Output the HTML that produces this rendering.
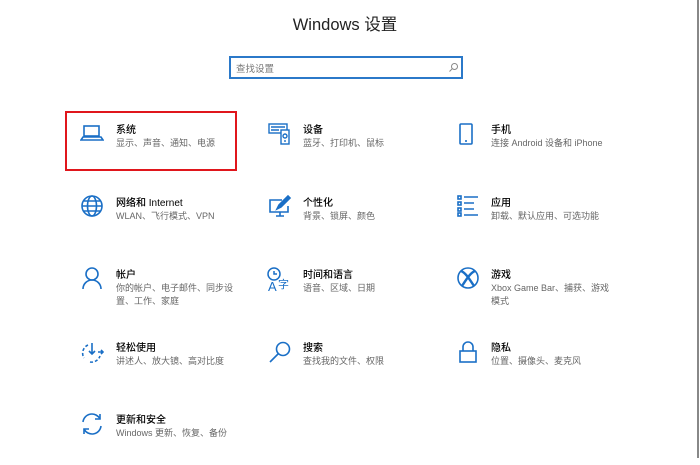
<!DOCTYPE html>
<html><head><meta charset="utf-8"><style>
body{margin:0;width:700px;height:465px;background:#fff;position:relative;overflow:hidden;font-family:"Liberation Sans","Noto Sans CJK SC",sans-serif;}
.t{position:absolute;font-size:10px;color:#000;white-space:nowrap;line-height:12px;font-weight:500}
.s{position:absolute;font-size:9px;color:#666;line-height:13px;white-space:nowrap}
svg{position:absolute}
</style></head><body>
<div style="position:absolute;left:0;width:690px;top:11px;text-align:center;font-size:16.5px;color:#222;">Windows 设置</div>
<div style="position:absolute;left:229px;top:56px;width:230px;height:19px;border:2px solid #2b79c9;"></div>
<div style="position:absolute;left:236px;top:61px;font-size:9.5px;color:#777">查找设置</div>
<svg style="left:448px;top:62px" width="11" height="11" viewBox="0 0 11 11"><circle cx="6.5" cy="4.5" r="3" fill="none" stroke="#888"/><path d="M4.3 6.7L1.5 9.5" stroke="#888"/></svg>
<div style="position:absolute;left:65px;top:111px;width:168px;height:56px;border:2px solid #e0161c"></div>
<div style="position:absolute;left:697px;top:0;width:2px;height:458px;background:#888"></div>

<svg style="left:80px;top:124px" width="24" height="20" viewBox="0 0 24 20" fill="none" stroke="#1a6fc6" stroke-width="1.6"><rect x="4" y="2" width="15" height="10"/><path d="M1 16h22l-2-3H3z"/></svg>
<div class="t" style="left:116px;top:125px">系统</div><div class="s" style="left:116px;top:137px">显示、声音、通知、电源</div>

<svg style="left:268px;top:122px" width="24" height="24" viewBox="0 0 24 24" fill="none" stroke="#1a6fc6" stroke-width="1.4"><rect x="1" y="2" width="18" height="9"/><path d="M3 5h14M3 8h8"/><rect x="13" y="8" width="8" height="14" fill="#fff"/><circle cx="17" cy="14" r="2"/><path d="M16 19h2"/></svg>
<div class="t" style="left:303px;top:125px">设备</div><div class="s" style="left:303px;top:137px">蓝牙、打印机、鼠标</div>

<svg style="left:456px;top:122px" width="20" height="24" viewBox="0 0 20 24" fill="none" stroke="#1a6fc6" stroke-width="1.6"><rect x="4" y="2" width="12" height="20" rx="1"/><path d="M9 19h2"/></svg>
<div class="t" style="left:491px;top:125px">手机</div><div class="s" style="left:491px;top:137px">连接 Android 设备和 iPhone</div>

<svg style="left:80px;top:194px" width="24" height="24" viewBox="0 0 24 24" fill="none" stroke="#1a6fc6" stroke-width="1.6"><circle cx="12" cy="12" r="10"/><ellipse cx="12" cy="12" rx="4.5" ry="10"/><path d="M2 12h20M4 7h16M4 17h16"/></svg>
<div class="t" style="left:116px;top:198px">网络和 Internet</div><div class="s" style="left:116px;top:210px">WLAN、飞行模式、VPN</div>

<svg style="left:268px;top:194px" width="24" height="24" viewBox="0 0 24 24" fill="none" stroke="#1a6fc6" stroke-width="1.6"><path d="M14 6H2v12h18v-6M8 22h8M12 18v4"/><path d="M9 15l2-4 9-9 2 2-9 9z" fill="#1a6fc6"/></svg>
<div class="t" style="left:303px;top:198px">个性化</div><div class="s" style="left:303px;top:210px">背景、锁屏、颜色</div>

<svg style="left:456px;top:194px" width="24" height="24" viewBox="0 0 24 24" fill="none" stroke="#1a6fc6" stroke-width="1.6"><rect x="2" y="2" width="3" height="3"/><rect x="2" y="8" width="3" height="3"/><rect x="2" y="14" width="3" height="3"/><rect x="2" y="19" width="3" height="3"/><path d="M8 3h14M8 9h10M8 15h10M8 21h14"/></svg>
<div class="t" style="left:491px;top:198px">应用</div><div class="s" style="left:491px;top:210px">卸载、默认应用、可选功能</div>

<svg style="left:80px;top:266px" width="24" height="24" viewBox="0 0 24 24" fill="none" stroke="#1a6fc6" stroke-width="1.6"><circle cx="12" cy="8" r="6"/><path d="M3 23c0-5 4-9 9-9s9 4 9 9"/></svg>
<div class="t" style="left:116px;top:270px">帐户</div><div class="s" style="left:116px;top:282px">你的帐户、电子邮件、同步设<br>置、工作、家庭</div>

<svg style="left:266px;top:266px" width="26" height="26" viewBox="0 0 26 26" fill="none" stroke="#1a6fc6" stroke-width="1.5"><circle cx="8" cy="8" r="6"/><path d="M8 5v3h3"/><text x="2" y="25" font-size="13" fill="#1a6fc6" stroke="none" font-family="Liberation Sans">A</text><text x="12" y="22" font-size="11" fill="#1a6fc6" stroke="none" font-family="Noto Sans CJK SC">字</text></svg>
<div class="t" style="left:303px;top:270px">时间和语言</div><div class="s" style="left:303px;top:282px">语音、区域、日期</div>

<svg style="left:456px;top:266px" width="24" height="24" viewBox="0 0 24 24" fill="none" stroke="#1a6fc6" stroke-width="1.6"><circle cx="12" cy="12" r="10"/><path d="M5 5c5 2 9 9 13 15M19 5c-5 2-9 9-13 15" stroke-width="2.4"/></svg>
<div class="t" style="left:491px;top:270px">游戏</div><div class="s" style="left:491px;top:282px">Xbox Game Bar、捕获、游戏<br>模式</div>

<svg style="left:80px;top:340px" width="24" height="24" viewBox="0 0 24 24" fill="none" stroke="#1a6fc6" stroke-width="1.6"><path d="M8 5a9 9 0 0 0-4 13M10 22a9 9 0 0 0 10-6" stroke-dasharray="3 2"/><path d="M12 3v11M9 11l3 3 3-3M18 12h5M21 10l2 2-2 2"/></svg>
<div class="t" style="left:116px;top:343px">轻松使用</div><div class="s" style="left:116px;top:355px">讲述人、放大镜、高对比度</div>

<svg style="left:268px;top:340px" width="24" height="24" viewBox="0 0 24 24" fill="none" stroke="#1a6fc6" stroke-width="1.6"><circle cx="15" cy="9" r="6.5"/><path d="M10.5 13.5L2 22"/></svg>
<div class="t" style="left:303px;top:343px">搜索</div><div class="s" style="left:303px;top:355px">查找我的文件、权限</div>

<svg style="left:456px;top:340px" width="24" height="24" viewBox="0 0 24 24" fill="none" stroke="#1a6fc6" stroke-width="1.6"><path d="M7 11V7a5 5 0 0 1 10 0v4"/><rect x="4" y="11" width="16" height="11"/></svg>
<div class="t" style="left:491px;top:343px">隐私</div><div class="s" style="left:491px;top:355px">位置、摄像头、麦克风</div>

<svg style="left:80px;top:412px" width="24" height="24" viewBox="0 0 24 24" fill="none" stroke="#1a6fc6" stroke-width="1.6"><path d="M3 10a9 9 0 0 1 17-3M21 14a9 9 0 0 1-17 3"/><path d="M20 2v5h-5M4 22v-5h5"/></svg>
<div class="t" style="left:116px;top:415px">更新和安全</div><div class="s" style="left:116px;top:427px">Windows 更新、恢复、备份</div>
</body></html>
